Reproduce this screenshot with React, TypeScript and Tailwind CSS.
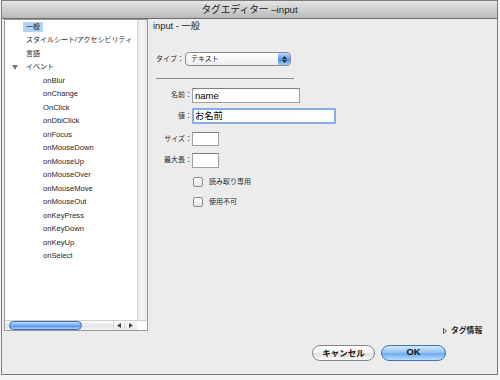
const events = [
  "onBlur",
  "onChange",
  "OnClick",
  "onDblClick",
  "onFocus",
  "onMouseDown",
  "onMouseUp",
  "onMouseOver",
  "onMouseMove",
  "onMouseOut",
  "onKeyPress",
  "onKeyDown",
  "onKeyUp",
  "onSelect",
];

interface TreeItem {
  label: string;
  level: number;
  selected?: boolean;
  open?: boolean;
}

const tree: TreeItem[] = [
  { label: "一般", level: 0, selected: true },
  { label: "スタイルシート/アクセシビリティ", level: 0 },
  { label: "言語", level: 0 },
  { label: "イベント", level: 0, open: true },
  ...events.map((e) => ({ label: e, level: 1 })),
];

const TreeRow = ({ item }: { item: TreeItem }) => (
  <div className="flex h-[13.5px] items-center pl-[7px]">
    <div className="flex w-[11px] items-center">
      {item.open && (
        <svg width="6" height="5" viewBox="0 0 6 5">
          <path d="M0 0 H6 L3 5 Z" fill="#7a7a7a" />
        </svg>
      )}
    </div>
    <span
      className={
        "h-[10px] px-[3px] leading-[10px] text-[#1e1e1e] " +
        (item.level === 1 ? "ml-[17px] text-[7.6px]" : "text-[7px]") +
        (item.selected ? " bg-[#b4d2f6]" : "")
      }
    >
      {item.label}
    </span>
  </div>
);

const FieldRow = ({
  label,
  children,
  className,
}: {
  label: string;
  children: React.ReactNode;
  className?: string;
}) => (
  <div className={"flex items-center " + (className ?? "")}>
    <div className="w-[39px] text-right text-[7px] text-[#2a2a2a]">{label}</div>
    {children}
  </div>
);

const Check = ({ label, className }: { label: string; className?: string }) => (
  <div className={"ml-[40px] flex items-center " + (className ?? "")}>
    <div className="h-[10px] w-[10px] rounded-[2px] border border-[#8c8c8c] bg-[linear-gradient(to_bottom,#ffffff,#e4e4e4)]" />
    <span className="ml-[6px] text-[7px] text-[#2a2a2a]">{label}</span>
  </div>
);

export default function App() {
  return (
    <div className="h-[380px] w-[500px] overflow-hidden bg-[#f4f4f4] font-['Liberation_Sans','Noto_Sans_CJK_JP',sans-serif]">
      <div className="ml-[1px] flex h-[375px] w-[497px] flex-col border border-[#7b7b7b] bg-[#ececec]">
        {/* title bar */}
        <div className="h-[18px] border-b border-[#6c6c6c] bg-[linear-gradient(to_bottom,#e4e4e4,#bababa)] text-center text-[9.7px] leading-[17px] text-[#222]">
          タグエディター –input
        </div>

        <div className="flex flex-1">
          {/* tree list */}
          <div className="w-[146px] pl-[2px]">
            <div className="flex h-[312px] w-[144px] flex-col border border-[#9a9a9a] bg-white">
              <div className="flex flex-1">
                <div className="flex-1 pt-[0px]">
                  {tree.map((item) => (
                    <TreeRow key={item.label} item={item} />
                  ))}
                </div>
                <div className="w-[10px] border-l border-[#d4d4d4] bg-[linear-gradient(to_right,#e6e6e6,#f6f6f6_40%,#e9e9e9)]" />
              </div>
              <div className="flex h-[10px] border-t border-[#cfcfcf]">
                <div className="flex w-[108px] items-center rounded-r-full bg-[linear-gradient(to_bottom,#fbfbfb,#e4e4e4_55%,#f4f4f4)] pl-[4px]">
                  <div className="h-[9px] w-[73px] rounded-full border border-[#3d6cbf] bg-[linear-gradient(to_bottom,#c7defa,#6ea6ec_50%,#4f91e6_55%,#a9d1fa)]" />
                </div>
                <div className="flex flex-1 items-center border-l border-[#d0d0d0] bg-[linear-gradient(to_bottom,#fafafa,#e8e8e8)]">
                  <div className="flex w-[11px] justify-center border-r border-[#d0d0d0]">
                    <svg width="4" height="5" viewBox="0 0 4 5">
                      <path d="M4 0 V5 L0 2.5 Z" fill="#444" />
                    </svg>
                  </div>
                  <div className="flex w-[11px] justify-center">
                    <svg width="4" height="5" viewBox="0 0 4 5">
                      <path d="M0 0 V5 L4 2.5 Z" fill="#444" />
                    </svg>
                  </div>
                </div>
                <div className="w-[10px] bg-white" />
              </div>
            </div>
          </div>

          {/* form panel */}
          <div className="flex flex-1 flex-col pl-[5px]">
            <div className="mt-[1px] h-[12px] text-[9.3px] leading-[12px] text-[#1c1c1c]">
              input - 一般
            </div>

            <div className="ml-[3px] mt-[20px] flex h-[14px] items-center">
              <div className="w-[29px] text-[7px] text-[#2a2a2a]">タイプ：</div>
              <div className="flex h-[14px] w-[106px] items-center rounded-[4px] border border-[#8b8b8b] bg-[linear-gradient(to_bottom,#ffffff,#ececec)]">
                <span className="flex-1 pl-[5px] text-[7px] text-[#222]">テキスト</span>
                <div className="flex h-full w-[12px] flex-col items-center justify-center gap-[1px] rounded-r-[4px] bg-[linear-gradient(to_bottom,#b9d8fa,#5f9de9_50%,#4c8fe4_55%,#9fcbf7)]">
                  <svg width="5" height="3" viewBox="0 0 5 3">
                    <path d="M0 3 L2.5 0 L5 3 Z" fill="#1c2c44" />
                  </svg>
                  <svg width="5" height="3" viewBox="0 0 5 3">
                    <path d="M0 0 L2.5 3 L5 0 Z" fill="#1c2c44" />
                  </svg>
                </div>
              </div>
            </div>

            <div className="ml-[3px] mt-[12px] h-px w-[138px] bg-[#8c8c8c]" />

            <FieldRow label="名前：" className="mt-[9px]">
              <div className="h-[15px] w-[108px] border border-[#a0a0a0] border-t-[#7f7f7f] bg-white pl-[2px] text-[9.5px] leading-[13px] text-black">
                name
              </div>
            </FieldRow>

            <FieldRow label="値：" className="mt-[5px]">
              <div className="h-[16px] w-[144px] rounded-[1px] border-2 border-[#86aee5] bg-white pl-[1px] text-[9.3px] leading-[12px] text-black">
                お名前
              </div>
            </FieldRow>

            <FieldRow label="サイズ：" className="mt-[8px]">
              <div className="h-[14px] w-[27px] border border-[#a0a0a0] border-t-[#7f7f7f] bg-white" />
            </FieldRow>

            <FieldRow label="最大長：" className="mt-[7px]">
              <div className="h-[15px] w-[27px] border border-[#a0a0a0] border-t-[#7f7f7f] bg-white" />
            </FieldRow>

            <Check label="読み取り専用" className="mt-[9px]" />
            <Check label="使用不可" className="mt-[9px]" />

            <div className="mt-auto ml-[290px] flex items-center">
              <svg width="4" height="6" viewBox="0 0 4 6">
                <path d="M0.5 0.5 V5.5 L3.5 3 Z" fill="none" stroke="#333" strokeWidth="0.8" />
              </svg>
              <span className="ml-[4px] text-[7.8px] font-bold text-[#222]">タグ情報</span>
            </div>

            <div className="mb-[13px] ml-[159px] mt-[8px] flex gap-[6px]">
              <div className="flex h-[16px] w-[63px] items-center justify-center rounded-full border border-[#868686] bg-[linear-gradient(to_bottom,#ffffff,#f2f2f2_50%,#e0e0e0_55%,#fbfbfb)] text-[8.5px] font-bold text-[#111]">
                キャンセル
              </div>
              <div className="flex h-[16px] w-[65px] items-center justify-center rounded-full border border-[#4772b4] bg-[linear-gradient(to_bottom,#d6e8fb,#8fc1f3_50%,#6aa9ef_55%,#bde0fc)] text-[9.3px] font-bold text-[#111]">
                OK
              </div>
            </div>
          </div>
        </div>
      </div>
    </div>
  );
}
